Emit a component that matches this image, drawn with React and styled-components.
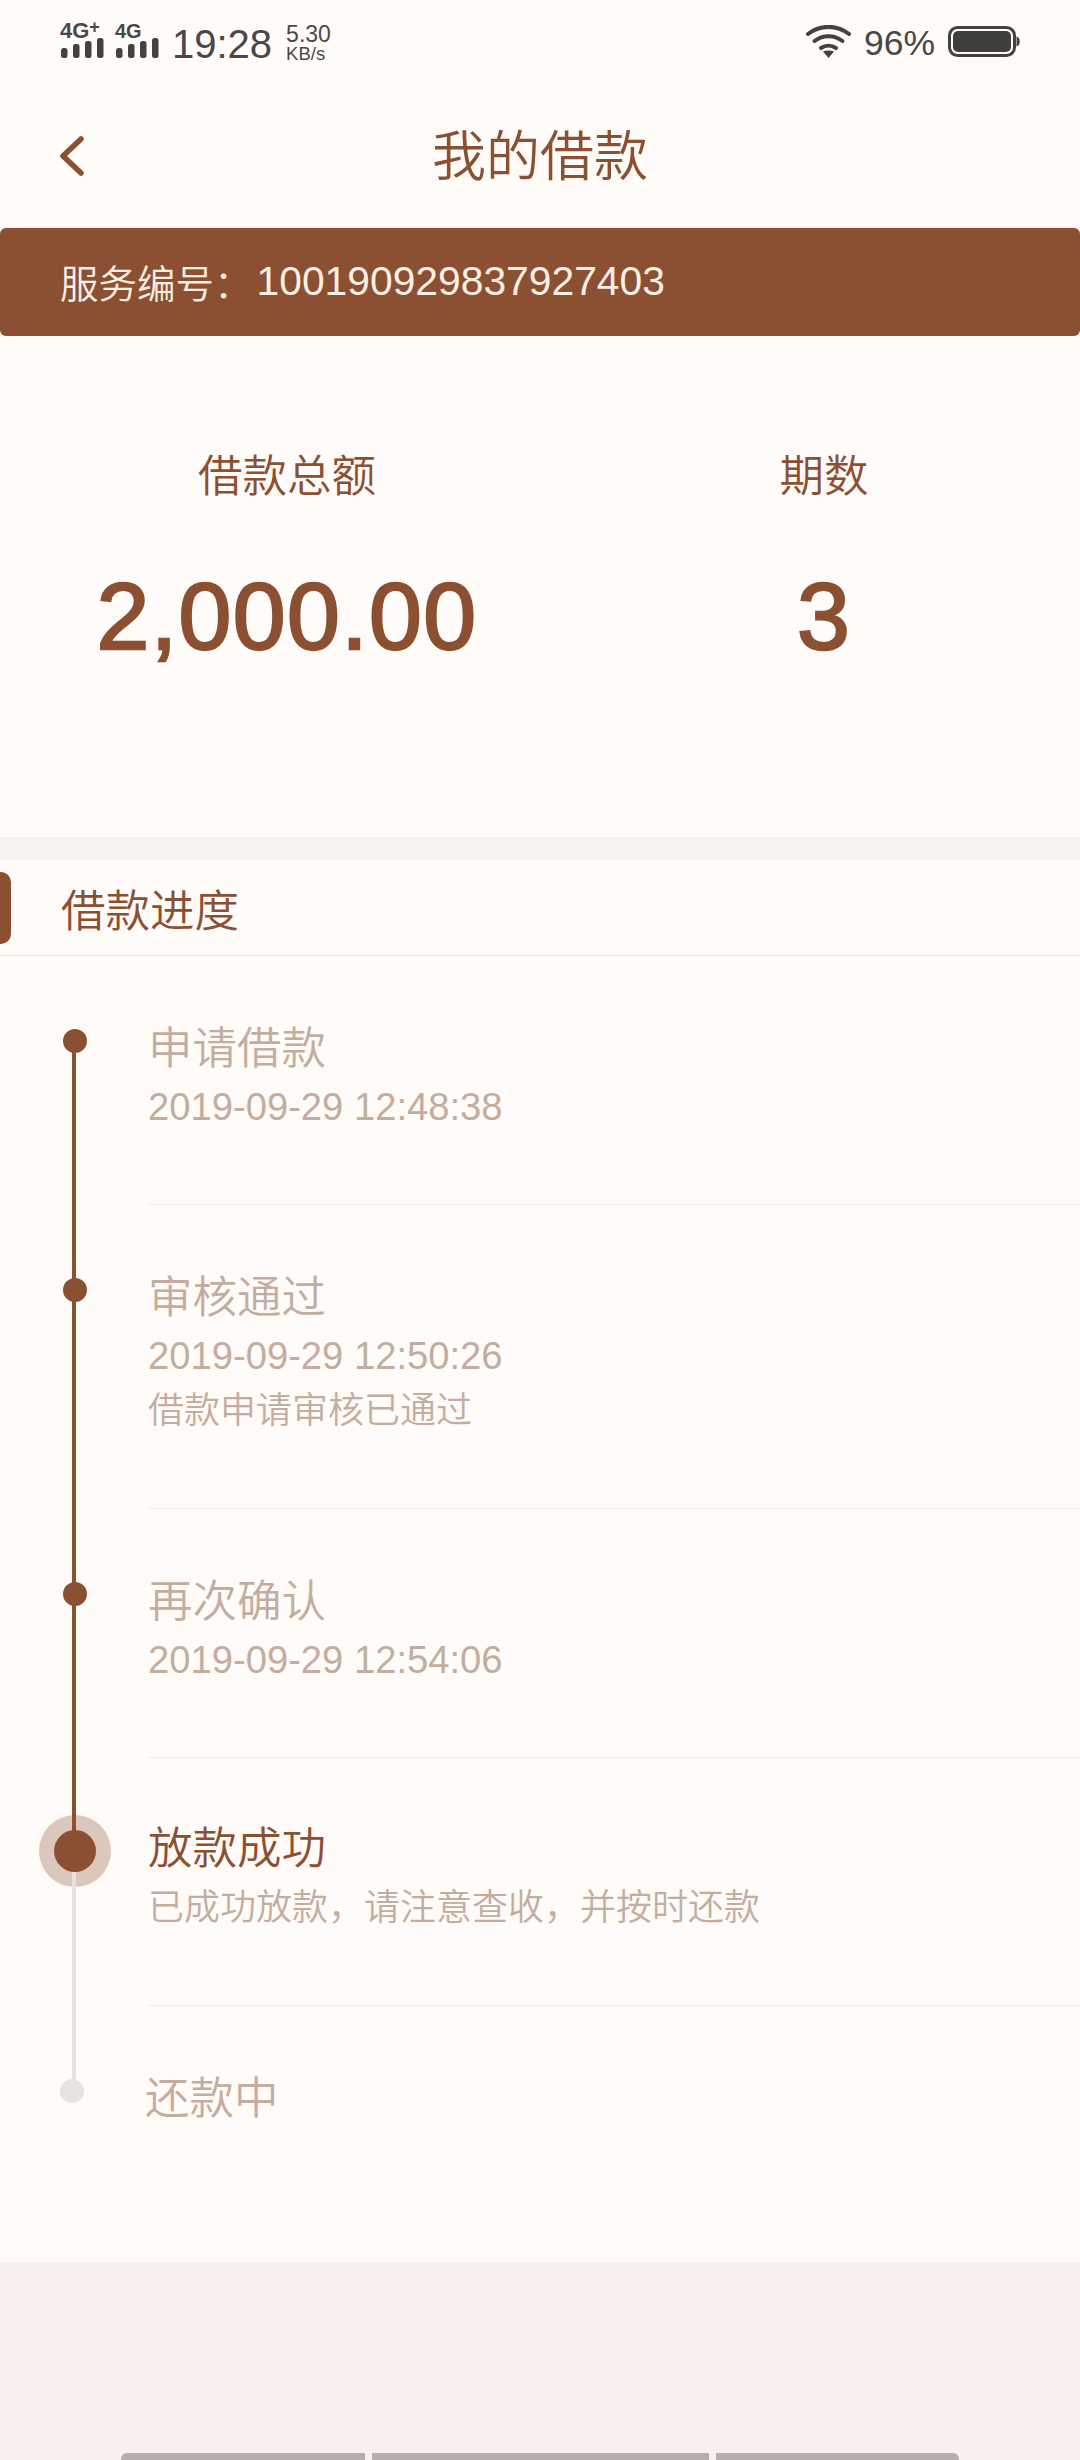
import React from "react";
import styled, { createGlobalStyle } from "styled-components";

const BROWN = "#8b5032";
const MUTED = "#c4ad9f";
const GRAY = "#e6e3e1";
const PAPER = "#fffbf8";
const FONT = `"Liberation Sans", "Noto Sans CJK SC", sans-serif`;

const GlobalStyle = createGlobalStyle`
  html, body {
    margin: 0;
    padding: 0;
    background: #f8f0ee;
    font-family: ${FONT};
  }
`;

const Page = styled.div`
  position: relative;
  width: 1080px;
  height: 2460px;
  overflow: hidden;
  display: flex;
  flex-direction: column;
  background: #f8f0ee;
`;

const Card = styled.main`
  height: 2262px;
  background: ${PAPER};
  display: flex;
  flex-direction: column;
`;

/* status bar */
const StatusBar = styled.div`
  height: 84px;
  box-sizing: border-box;
  padding: 0 60px;
  display: flex;
  align-items: center;
  justify-content: space-between;
  color: #4a4846;
`;

const StatusGroup = styled.div`
  display: flex;
  align-items: center;
`;

const Signal = styled.div`
  position: relative;
  width: ${({ $w }) => $w}px;
  height: 36px;
  margin-right: ${({ $gap }) => $gap}px;
  margin-top: -4px;
`;

const SignalLabel = styled.span`
  position: absolute;
  left: 0;
  top: -3px;
  font: 700 ${({ $size }) => $size}px/24px "Liberation Sans", sans-serif;

  b {
    position: absolute;
    left: 100%;
    top: -4px;
    font-size: 18px;
  }
`;

const SignalBars = styled.svg`
  position: absolute;
  left: 0;
  bottom: 0;
`;

const Clock = styled.span`
  font-size: 40px;
  line-height: 48px;
  margin-top: 4px;
  margin-right: 14px;
`;

const Speed = styled.div`
  display: flex;
  flex-direction: column;
`;

const SpeedValue = styled.span`
  font-size: 23px;
  line-height: 23px;
`;

const SpeedUnit = styled.span`
  font-size: 18.5px;
  line-height: 16px;
`;

const Percent = styled.span`
  font-size: 35.5px;
  margin: 2px 13px 0;
`;

const Icon = styled.svg`
  display: block;
`;

/* header */
const Header = styled.header`
  height: 144px;
  box-sizing: border-box;
  padding: 0 60px 2px;
  display: grid;
  grid-template-columns: 1fr auto 1fr;
  align-items: center;
`;

const BackIcon = styled.svg`
  display: block;
  margin-top: 2px;
`;

const Title = styled.h1`
  margin: 0 0 5px;
  font-size: 54px;
  font-weight: 350;
  color: ${BROWN};
`;

const Banner = styled.div`
  height: 108px;
  box-sizing: border-box;
  padding: 0 0 2px 60px;
  display: flex;
  align-items: center;
  background: ${BROWN};
  border-radius: 6px;
  color: #fbeee4;
  font-size: 38.5px;
  font-weight: 350;
`;

const BannerNumber = styled.span`
  margin-left: 4px;
  font-size: 40.8px;
  font-weight: 400;
`;

/* amounts */
const Stats = styled.section`
  height: 501px;
  box-sizing: border-box;
  padding-top: 111px;
  display: grid;
  grid-template-columns: 574px 500px;
  align-content: start;
  text-align: center;
  color: ${BROWN};
`;

const Stat = styled.div`
  display: flex;
  flex-direction: column;
  align-items: center;
`;

const StatLabel = styled.span`
  font-size: 44.5px;
  line-height: 60px;
  font-weight: 350;
`;

const StatValue = styled.span`
  margin-top: 54px;
  font-size: 95px;
  line-height: 110px;
  letter-spacing: 1.4px;
  -webkit-text-stroke: 2.4px ${BROWN};
`;

const Band = styled.div`
  height: 23px;
  background: #f6f2ef;
`;

const SectionHeader = styled.div`
  height: 96px;
  box-sizing: border-box;
  display: flex;
  align-items: center;
  border-bottom: 1px solid #e9e5e2;
`;

const SectionMark = styled.i`
  width: 11px;
  height: 72px;
  margin-right: 50px;
  background: ${BROWN};
  border-radius: 0 10px 10px 0;
`;

const SectionTitle = styled.h2`
  margin: 0;
  font-size: 44.5px;
  font-weight: 350;
  color: ${BROWN};
`;

/* timeline */
const Step = styled.div`
  display: flex;
`;

const Rail = styled.div`
  position: relative;
  flex: none;
  width: ${({ $last }) => ($last ? 145 : 148)}px;
`;

const RailLine = styled.span`
  position: absolute;
  left: 72px;
  width: 4px;
  top: ${({ $top }) => $top}px;
  height: ${({ $h }) => $h}px;
  background: ${({ $done }) => ($done ? BROWN : GRAY)};
`;

const Dot = styled.span`
  position: absolute;
  left: ${({ $x }) => $x - 12}px;
  top: 73px;
  width: 24px;
  height: 24px;
  border-radius: 50%;
  background: ${({ $done }) => ($done ? BROWN : GRAY)};
`;

const Halo = styled.span`
  position: absolute;
  left: 39px;
  top: 57px;
  width: 72px;
  height: 72px;
  border-radius: 50%;
  background: rgba(139, 80, 50, 0.3);
`;

const CurrentDot = styled.span`
  position: absolute;
  left: 54px;
  top: 72px;
  width: 42px;
  height: 42px;
  border-radius: 50%;
  background: ${BROWN};
`;

const StepBody = styled.div`
  flex: 1;
  box-sizing: border-box;
  padding: ${({ $active }) => ($active ? 65 : 67)}px 0 ${({ $last }) => ($last ? 137 : 70)}px;
  border-bottom: ${({ $last }) => ($last ? "none" : "1px solid #efebe8")};
`;

const StepTitle = styled.div`
  font-size: 44.5px;
  line-height: 52px;
  font-weight: 350;
  color: ${({ $active }) => ($active ? BROWN : MUTED)};
`;

const StepDate = styled.div`
  margin-top: 5px;
  font-size: 38.2px;
  line-height: 54px;
  color: ${MUTED};
`;

const StepNote = styled.div`
  margin-top: ${({ $first }) => ($first ? 6 : 1)}px;
  font-size: 36px;
  line-height: 54px;
  font-weight: 350;
  color: ${MUTED};
`;

/* gesture bar */
const NavBar = styled.div`
  position: absolute;
  left: 121px;
  bottom: 0;
  display: flex;
  gap: 7px;
`;

const NavPiece = styled.span`
  width: ${({ $w }) => $w}px;
  height: 7px;
  background: #b5aeab;
  border-radius: ${({ $r }) => $r};
`;

const Bars = () => (
  <SignalBars width="44" height="20" viewBox="0 0 44 20" fill="#444240">
    <rect x="1" y="10" width="6.5" height="10" rx="2.5" />
    <rect x="13" y="6" width="6.5" height="14" rx="2.5" />
    <rect x="25" y="3" width="6.5" height="17" rx="2.5" />
    <rect x="37" y="0" width="6.5" height="20" rx="2.5" />
  </SignalBars>
);

const Wifi = () => (
  <Icon width="45" height="34" viewBox="0 0 45 34" fill="none" stroke="#444240" strokeWidth="4" strokeLinecap="round">
    <path d="M2 9C14-0.5 31-0.5 43 9" />
    <path d="M8.5 16C17 9.5 28 9.5 36.5 16" />
    <path d="M15 23C19.5 20 25.5 20 30 23" />
    <path d="M17 26.5C20.5 25 24.5 25 28 26.5L22.5 33Z" fill="#444240" stroke="none" />
  </Icon>
);

const Battery = () => (
  <Icon width="72" height="32" viewBox="0 0 72 32" fill="none">
    <rect x="1.5" y="1.5" width="65" height="28" rx="8" stroke="#444240" strokeWidth="3" />
    <rect x="5" y="5" width="58" height="21" rx="5" fill="#40403a" />
    <path d="M68.5 10.5c2.5 .5 3.2 2.5 3.2 5s-.7 4.5-3.2 5z" fill="#444240" />
  </Icon>
);

const Back = () => (
  <BackIcon width="24" height="40" viewBox="0 0 24 40" fill="none" stroke={BROWN} strokeWidth="5.5" strokeLinecap="round" strokeLinejoin="round">
    <path d="M21 3L3 20L21 37" />
  </BackIcon>
);

const steps = [
  { title: "申请借款", date: "2019-09-29 12:48:38" },
  { title: "审核通过", date: "2019-09-29 12:50:26", note: "借款申请审核已通过" },
  { title: "再次确认", date: "2019-09-29 12:54:06" },
  { title: "放款成功", note: "已成功放款，请注意查收，并按时还款", active: true },
  { title: "还款中", last: true },
];

const stepHeights = [249, 304, 249, 248, 256];

const StepRail = ({ index, active, last }) => {
  const h = stepHeights[index];
  if (active) {
    return (
      <Rail>
        <Halo />
        <RailLine $done $top={0} $h={93} />
        <RailLine $top={93} $h={h - 93} />
        <CurrentDot />
      </Rail>
    );
  }
  if (last) {
    return (
      <Rail $last>
        <RailLine $top={0} $h={85} />
        <Dot $x={72} />
      </Rail>
    );
  }
  return (
    <Rail>
      <RailLine $done $top={index === 0 ? 85 : 0} $h={index === 0 ? h - 85 : h} />
      <Dot $done $x={75} />
    </Rail>
  );
};

export default function App() {
  return (
    <Page>
      <GlobalStyle />
      <Card>
        <StatusBar>
          <StatusGroup>
            <Signal $w={44} $gap={11}>
              <SignalLabel $size={22}>
                4G<b>+</b>
              </SignalLabel>
              <Bars />
            </Signal>
            <Signal $w={44} $gap={13}>
              <SignalLabel $size={20}>4G</SignalLabel>
              <Bars />
            </Signal>
            <Clock>19:28</Clock>
            <Speed>
              <SpeedValue>5.30</SpeedValue>
              <SpeedUnit>KB/s</SpeedUnit>
            </Speed>
          </StatusGroup>
          <StatusGroup>
            <Wifi />
            <Percent>96%</Percent>
            <Battery />
          </StatusGroup>
        </StatusBar>
        <Header>
          <Back />
          <Title>我的借款</Title>
        </Header>
        <Banner>
          服务编号：<BannerNumber>100190929837927403</BannerNumber>
        </Banner>
        <Stats>
          <Stat>
            <StatLabel>借款总额</StatLabel>
            <StatValue>2,000.00</StatValue>
          </Stat>
          <Stat>
            <StatLabel>期数</StatLabel>
            <StatValue>3</StatValue>
          </Stat>
        </Stats>
        <Band />
        <SectionHeader>
          <SectionMark />
          <SectionTitle>借款进度</SectionTitle>
        </SectionHeader>
        {steps.map((s, i) => (
          <Step key={s.title}>
            <StepRail index={i} active={s.active} last={s.last} />
            <StepBody $active={s.active} $last={s.last}>
              <StepTitle $active={s.active}>{s.title}</StepTitle>
              {s.date && <StepDate>{s.date}</StepDate>}
              {s.note && <StepNote $first={!s.date}>{s.note}</StepNote>}
            </StepBody>
          </Step>
        ))}
      </Card>
      <NavBar>
        <NavPiece $w={244} $r="6px 0 0 0" />
        <NavPiece $w={337} $r="0" />
        <NavPiece $w={243} $r="0 6px 0 0" />
      </NavBar>
    </Page>
  );
}
